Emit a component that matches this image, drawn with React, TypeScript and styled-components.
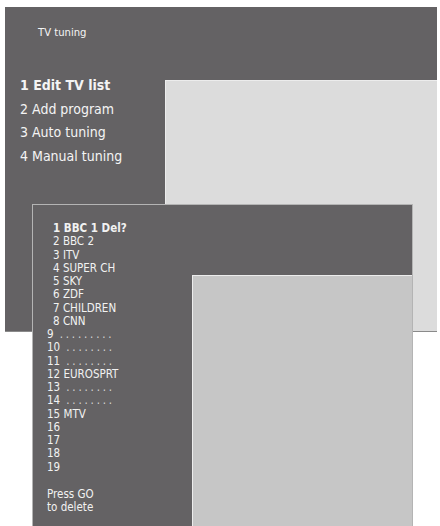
import * as React from 'react';
import styled, { createGlobalStyle } from 'styled-components';

const GlobalStyle = createGlobalStyle`
  html, body {
    margin: 0;
    padding: 0;
    background: #ffffff;
    overflow: hidden;
  }
  body {
    font-family: 'DejaVu Sans Condensed', 'DejaVu Sans', sans-serif;
    font-stretch: condensed;
  }
`;

const Stage = styled.div`
  position: relative;
  width: 440px;
  height: 526px;
  overflow: hidden;
  padding: 7px 0 0 5px;
  box-sizing: border-box;
`;

const MenuPanel = styled.div`
  display: flex;
  width: 432px;
  height: 325px;
  background: #646264;
  border-bottom: 1px solid #8a8a8a;
  box-sizing: border-box;
`;

const MenuColumn = styled.div`
  width: 160px;
  display: flex;
  flex-direction: column;
  padding: 19px 0 0 15px;
  box-sizing: border-box;
`;

const Title = styled.div`
  margin-left: 18px;
  font-size: 11.2px;
  line-height: 14px;
  color: #f4f4f4;
`;

const MenuList = styled.div`
  margin-top: 34px;
  display: flex;
  flex-direction: column;
`;

const MenuItem = styled.div<{ $active?: boolean }>`
  font-size: 14px;
  line-height: 23.7px;
  color: #f4f4f4;
  font-weight: ${(p) => (p.$active ? 700 : 400)};
  white-space: nowrap;
`;

const ScreenColumn = styled.div<{ $top: number }>`
  flex: 1;
  display: flex;
  flex-direction: column;
  padding-top: ${(p) => p.$top}px;
`;

const Screen = styled.div<{ $tone: string }>`
  flex: 1;
  background: ${(p) => p.$tone};
  border-top: 1px solid #ececec;
  border-left: 1px solid #ececec;
`;

const ListPanel = styled.div`
  position: absolute;
  left: 32px;
  top: 204px;
  width: 381px;
  height: 340px;
  display: flex;
  background: #646264;
  border: 1px solid #b4b4b4;
  box-sizing: border-box;
`;

const ListColumn = styled.div`
  width: 159px;
  display: flex;
  flex-direction: column;
  padding: 17px 0 0 14px;
  box-sizing: border-box;
`;

const Row = styled.div<{ $bold?: boolean; $indent?: boolean }>`
  font-size: 11.5px;
  line-height: 13.25px;
  height: 13.25px;
  color: #f2f2f2;
  font-weight: ${(p) => (p.$bold ? 700 : 400)};
  padding-left: ${(p) => (p.$indent ? 6 : 0)}px;
  white-space: nowrap;
`;

const Dots = styled.span`
  letter-spacing: 2.8px;
  color: #d8d8d8;
`;

const Note = styled.div`
  margin-top: 14px;
  font-size: 11.5px;
  line-height: 13.25px;
  color: #f2f2f2;
`;

type Channel = { no: number; name?: string; empty?: boolean };

const channels: Channel[] = [
  { no: 1, name: 'BBC 1 Del?' },
  { no: 2, name: 'BBC 2' },
  { no: 3, name: 'ITV' },
  { no: 4, name: 'SUPER CH' },
  { no: 5, name: 'SKY' },
  { no: 6, name: 'ZDF' },
  { no: 7, name: 'CHILDREN' },
  { no: 8, name: 'CNN' },
  { no: 9, empty: true },
  { no: 10, empty: true },
  { no: 11, empty: true },
  { no: 12, name: 'EUROSPRT' },
  { no: 13, empty: true },
  { no: 14, empty: true },
  { no: 15, name: 'MTV' },
  { no: 16 },
  { no: 17 },
  { no: 18 },
  { no: 19 },
];

const menu = ['1 Edit TV list', '2 Add program', '3 Auto tuning', '4 Manual tuning'];

const App = () => (
  <>
    <GlobalStyle />
    <Stage>
      <MenuPanel>
        <MenuColumn>
          <Title>TV tuning</Title>
          <MenuList>
            {menu.map((label, i) => (
              <MenuItem key={label} $active={i === 0}>
                {label}
              </MenuItem>
            ))}
          </MenuList>
        </MenuColumn>
        <ScreenColumn $top={73}>
          <Screen $tone="#dcdcdc" />
        </ScreenColumn>
      </MenuPanel>

      <ListPanel>
        <ListColumn>
          {channels.map((ch) => (
            <Row key={ch.no} $bold={ch.no === 1} $indent={ch.no < 9}>
              {ch.no}
              {ch.name && ` ${ch.name}`}
              {ch.empty && <Dots>{ch.no < 10 ? ' .........' : ' ........'}</Dots>}
            </Row>
          ))}
          <Note>
            Press GO
            <br />
            to delete
          </Note>
        </ListColumn>
        <ScreenColumn $top={70}>
          <Screen $tone="#c6c6c6" />
        </ScreenColumn>
      </ListPanel>
    </Stage>
  </>
);

export default App;
